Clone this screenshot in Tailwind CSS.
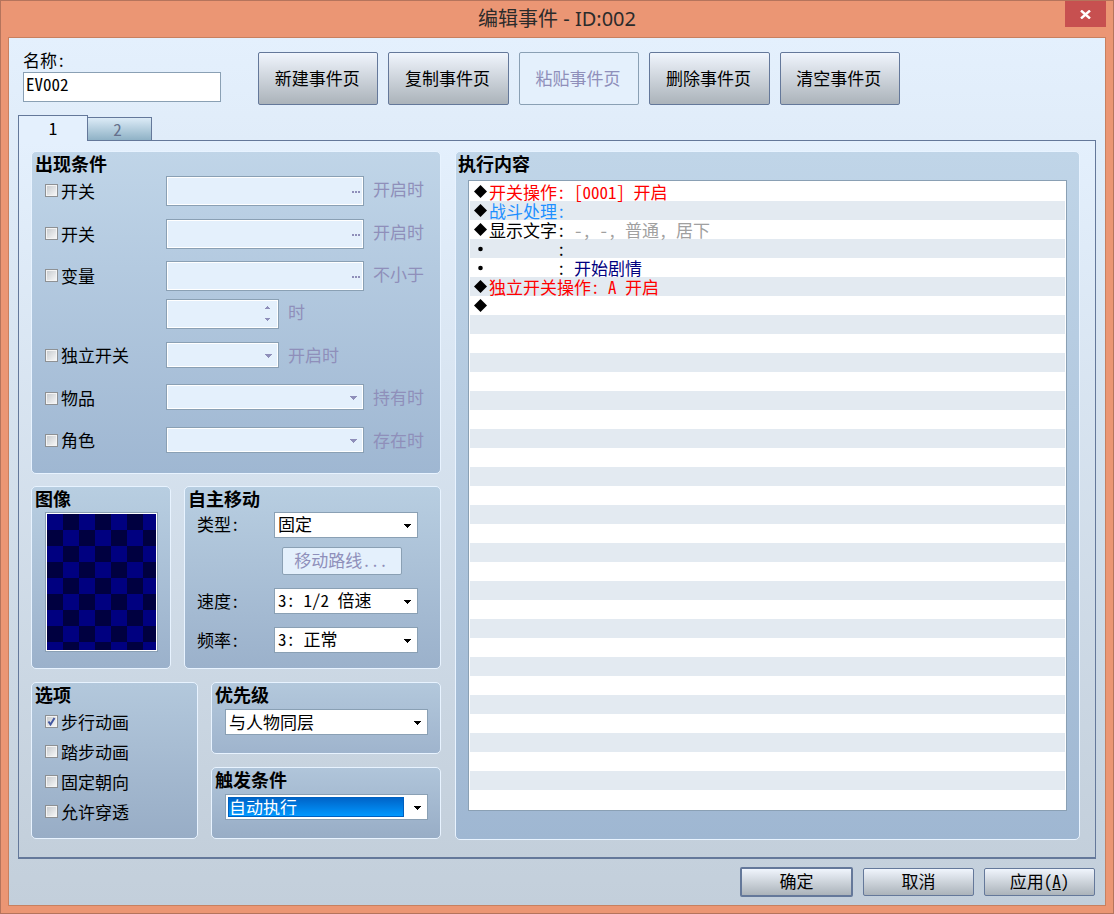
<!DOCTYPE html>
<html lang="zh-CN">

<head>
	<meta charset="UTF-8">
	<meta name="viewport" content="width=device-width, initial-scale=1.0">
	<title>编辑事件 - ID:002</title>
	<script src="https://cdn.jsdelivr.net/npm/@tailwindcss/browser@4"></script>
</head>

<body class="h-screen flex flex-col bg-[#eb9674] border border-[#b5745c] px-[7px] pb-[7px] text-[17px] leading-5 text-black font-['Noto_Sans_Mono_CJK_SC','Noto_Sans_CJK_SC',sans-serif]">
	<svg class="hidden">
		<symbol id="arrow" viewBox="0 0 7 4">
			<path fill="currentColor" d="M0 0h7v1H6v1H5v1H4v1H3V3H2V2H1V1H0z" />
		</symbol>
		<symbol id="dots" viewBox="0 0 8 2">
			<path fill="currentColor" d="M0 0h2v2H0zM3 0h2v2H3zM6 0h2v2H6z" />
		</symbol>
		<symbol id="diamond" viewBox="0 0 17 19">
			<path d="M8.500 3L15 9.500 8.500 16 2 9.500z" />
		</symbol>
	</svg>

	<!-- title bar -->
	<header class="h-9 shrink-0 flex items-start">
		<div class="w-[41px]"></div>
		<h1 class="flex-1 self-center text-center text-[20px] text-[#2b2b2b] font-['Noto_Sans','Noto_Sans_CJK_SC',sans-serif]">编辑事件 - ID:002</h1>
		<button type="button" aria-label="关闭" class="w-[41px] h-[26px] bg-[#c75050] flex items-center justify-center">
			<svg class="w-[11px] h-[9px]" viewBox="0 0 11 9"><path d="M1 .5l9 8M10 .5l-9 8" stroke="#fff" stroke-width="2.4" fill="none" /></svg>
		</button>
	</header>

	<main class="flex-1 min-h-0 flex flex-col border border-[#c8805f] bg-linear-to-b from-[#e4f0fd] to-[#c3cfdb] px-[9px]">
		<!-- name and page buttons -->
		<div class="flex pt-[14px] pl-[5px]">
			<div class="w-[198px] mr-[37px]">
				<label for="name" class="block h-5 leading-4">名称:</label>
				<input id="name" value="EV002" class="block w-full h-[30px] bg-white border border-[#8aa0b4] px-0.5 pb-2 outline-none">
			</div>
			<div class="grid grid-cols-5 gap-2.5 w-[642px] h-[53px]">
				<button type="button" class="pr-0.5 pb-0.5 border border-[#64789a] rounded-[2px] bg-linear-to-b from-[#f0f5fd] to-[#abb3ba]">新建事件页</button>
				<button type="button" class="pr-0.5 pb-0.5 border border-[#64789a] rounded-[2px] bg-linear-to-b from-[#f0f5fd] to-[#abb3ba]">复制事件页</button>
				<button type="button" disabled class="pr-0.5 pb-0.5 border border-[#8aa0b4] rounded-[2px] bg-[#e4f0fc] text-[#8f8fba]">粘贴事件页</button>
				<button type="button" class="pr-0.5 pb-0.5 border border-[#64789a] rounded-[2px] bg-linear-to-b from-[#f0f5fd] to-[#abb3ba]">删除事件页</button>
				<button type="button" class="pr-0.5 pb-0.5 border border-[#64789a] rounded-[2px] bg-linear-to-b from-[#f0f5fd] to-[#abb3ba]">清空事件页</button>
			</div>
		</div>

		<!-- tabs -->
		<div role="tablist" class="flex items-end mt-[10px] h-[26px] z-10">
			<button type="button" role="tab" aria-selected="true" class="w-[70px] h-[26px] pb-0.5 border border-b-0 border-[#64789a] bg-[#e4f0fd]">1</button>
			<button type="button" role="tab" aria-selected="false" class="w-16 h-6 pr-1 border border-l-0 border-[#64789a] bg-linear-to-b from-[#dcebf7] to-[#8fb2c6] text-[#65708c]">2</button>
		</div>

		<div class="flex-1 min-h-0 -mt-px flex gap-[14px] border border-b-2 border-[#64789a] bg-linear-to-b from-[#e4f0fd] to-[#c3cfdb] pl-3 pr-[15px] pt-[10px] pb-[17px]">
			<!-- left column -->
			<div class="w-[410px] shrink-0 flex flex-col">
				<section class="h-[323px] border border-[#e8f3ff] rounded-[5px] bg-linear-to-b from-[#c0d5e8] to-[#9fb7d2]">
					<h2 class="h-6 pl-[3px] leading-[22px] text-[18px] font-bold">出现条件</h2>
					<div class="flex items-center mb-[13px]">
						<label class="w-[134px] pl-[13px] flex items-center gap-[3px]"><input type="checkbox" class="appearance-none size-[13px] mb-0.5 border border-[#8e9194] ring-1 ring-inset ring-[#f4f4f4] bg-linear-to-br from-[#c4c8cc] to-[#fafafa]">开关</label>
						<div class="relative w-[198px] text-[#8f8fba]">
							<input aria-label="开关 1" disabled class="block w-full h-[30px] border border-[#8aa0b4] ring-1 ring-inset ring-white bg-[#e4f0fc]">
							<svg class="absolute right-1 top-[15px] w-2 h-0.5"><use href="#dots" /></svg>
						</div>
						<span class="pl-[9px] pb-1 text-[#8f8fba]">开启时</span>
					</div>
					<div class="flex items-center mb-3">
						<label class="w-[134px] pl-[13px] flex items-center gap-[3px]"><input type="checkbox" class="appearance-none size-[13px] mb-0.5 border border-[#8e9194] ring-1 ring-inset ring-[#f4f4f4] bg-linear-to-br from-[#c4c8cc] to-[#fafafa]">开关</label>
						<div class="relative w-[198px] text-[#8f8fba]">
							<input aria-label="开关 2" disabled class="block w-full h-[30px] border border-[#8aa0b4] ring-1 ring-inset ring-white bg-[#e4f0fc]">
							<svg class="absolute right-1 top-[15px] w-2 h-0.5"><use href="#dots" /></svg>
						</div>
						<span class="pl-[9px] pb-1 text-[#8f8fba]">开启时</span>
					</div>
					<div class="flex items-center mb-2">
						<label class="w-[134px] pl-[13px] flex items-center gap-[3px]"><input type="checkbox" class="appearance-none size-[13px] mb-0.5 border border-[#8e9194] ring-1 ring-inset ring-[#f4f4f4] bg-linear-to-br from-[#c4c8cc] to-[#fafafa]">变量</label>
						<div class="relative w-[198px] text-[#8f8fba]">
							<input aria-label="变量" disabled class="block w-full h-[30px] border border-[#8aa0b4] ring-1 ring-inset ring-white bg-[#e4f0fc]">
							<svg class="absolute right-1 top-[15px] w-2 h-0.5"><use href="#dots" /></svg>
						</div>
						<span class="pl-[9px] pb-1 text-[#8f8fba]">不小于</span>
					</div>
					<div class="flex items-center pl-[134px] mb-[13px]">
						<div class="relative w-[113px] text-[#8f8fba]">
							<input aria-label="变量值" disabled class="block w-full h-[30px] border border-[#8aa0b4] ring-1 ring-inset ring-white bg-[#e4f0fc]">
							<svg class="absolute right-[9px] top-[7px] w-[5px] h-[15px]" viewBox="0 0 5 15">
								<path fill="currentColor" d="M2 0h1v1h1v1h1v1H0V2h1V1h1zM0 12h5v1H4v1H3v1H2v-1H1v-1H0z" />
							</svg>
						</div>
						<span class="pl-[9px] pb-1 text-[#8f8fba]">时</span>
					</div>
					<div class="flex items-center mb-4">
						<label class="w-[134px] pl-[13px] flex items-center gap-[3px]"><input type="checkbox" class="appearance-none size-[13px] border border-[#8e9194] ring-1 ring-inset ring-[#f4f4f4] bg-linear-to-br from-[#c4c8cc] to-[#fafafa]">独立开关</label>
						<div class="relative w-[113px] text-[#8f8fba]">
							<select aria-label="独立开关" disabled class="block appearance-none w-full h-[26px] border border-[#8aa0b4] ring-1 ring-inset ring-white bg-[#e4f0fc]"></select>
							<svg class="absolute right-[7px] top-[12px] w-[7px] h-1"><use href="#arrow" /></svg>
						</div>
						<span class="pl-[9px] text-[#8f8fba]">开启时</span>
					</div>
					<div class="flex items-center mb-[17px]">
						<label class="w-[134px] pl-[13px] pt-0.5 flex items-center gap-[3px]"><input type="checkbox" class="appearance-none size-[13px] border border-[#8e9194] ring-1 ring-inset ring-[#f4f4f4] bg-linear-to-br from-[#c4c8cc] to-[#fafafa]">物品</label>
						<div class="relative w-[198px] text-[#8f8fba]">
							<select aria-label="物品" disabled class="block appearance-none w-full h-[26px] border border-[#8aa0b4] ring-1 ring-inset ring-white bg-[#e4f0fc]"></select>
							<svg class="absolute right-[7px] top-[12px] w-[7px] h-1"><use href="#arrow" /></svg>
						</div>
						<span class="pl-[9px] text-[#8f8fba]">持有时</span>
					</div>
					<div class="flex items-center">
						<label class="w-[134px] pl-[13px] flex items-center gap-[3px]"><input type="checkbox" class="appearance-none size-[13px] border border-[#8e9194] ring-1 ring-inset ring-[#f4f4f4] bg-linear-to-br from-[#c4c8cc] to-[#fafafa]">角色</label>
						<div class="relative w-[198px] text-[#8f8fba]">
							<select aria-label="角色" disabled class="block appearance-none w-full h-[26px] border border-[#8aa0b4] ring-1 ring-inset ring-white bg-[#e4f0fc]"></select>
							<svg class="absolute right-[7px] top-[12px] w-[7px] h-1"><use href="#arrow" /></svg>
						</div>
						<span class="pl-[9px] text-[#8f8fba]">存在时</span>
					</div>
				</section>

				<div class="flex justify-between h-[183px] mt-3">
					<section class="w-[140px] border border-[#e8f3ff] rounded-[5px] bg-linear-to-b from-[#b8cee1] to-[#9bb1cb]">
						<h2 class="h-[25px] pl-[3px] leading-[22px] text-[18px] font-bold">图像</h2>
						<!-- empty character graphic, 16px tiles -->
						<div class="ml-[13px] w-[113px] h-[140px] border border-[#8aa0b4] p-px bg-white">
							<div class="size-full bg-[conic-gradient(#000040_25%,#000080_0_50%,#000040_0_75%,#000080_0)] bg-size-[32px_32px]"></div>
						</div>
					</section>
					<section class="w-[257px] border border-[#e8f3ff] rounded-[5px] bg-linear-to-b from-[#b8cee1] to-[#9bb1cb]">
						<h2 class="h-[25px] pl-[3px] leading-[22px] text-[18px] font-bold">自主移动</h2>
						<div class="flex items-center mb-[9px] pl-3">
							<label for="move-type" class="w-[77px] pb-0.5">类型:</label>
							<div class="relative w-[144px]">
								<select id="move-type" class="block appearance-none w-full h-[26px] border border-[#8aa0b4] bg-white pl-[3px] pb-0.5 outline-none"><option>固定</option></select>
								<svg class="absolute right-[7px] top-[12px] w-[7px] h-1 pointer-events-none"><use href="#arrow" /></svg>
							</div>
						</div>
						<button type="button" disabled class="block ml-[97px] mb-[13px] w-[120px] h-7 pr-0.5 pb-0.5 border border-[#8aa0b4] rounded-[2px] bg-[#e4f0fc] text-[#8f8fba]">移动路线...</button>
						<div class="flex items-center mb-[13px] pl-3">
							<label for="move-speed" class="w-[77px]">速度:</label>
							<div class="relative w-[144px]">
								<select id="move-speed" class="block appearance-none w-full h-[26px] border border-[#8aa0b4] bg-white pl-[3px] pb-0.5 outline-none"><option>3: 1/2 倍速</option></select>
								<svg class="absolute right-[7px] top-[12px] w-[7px] h-1 pointer-events-none"><use href="#arrow" /></svg>
							</div>
						</div>
						<div class="flex items-center pl-3">
							<label for="move-freq" class="w-[77px]">频率:</label>
							<div class="relative w-[144px]">
								<select id="move-freq" class="block appearance-none w-full h-[26px] border border-[#8aa0b4] bg-white pl-[3px] pb-0.5 outline-none"><option>3: 正常</option></select>
								<svg class="absolute right-[7px] top-[12px] w-[7px] h-1 pointer-events-none"><use href="#arrow" /></svg>
							</div>
						</div>
					</section>
				</div>

				<div class="flex justify-between h-[157px] mt-[13px]">
					<section class="w-[167px] border border-[#e8f3ff] rounded-[5px] bg-linear-to-b from-[#b3c8dc] to-[#98adc6]">
						<h2 class="h-6 pl-[3px] leading-[22px] text-[18px] font-bold">选项</h2>
						<label class="h-[30px] pl-[13px] flex items-center gap-[3px]">
							<span class="relative block size-[13px] mb-0.5">
								<input type="checkbox" checked class="block appearance-none size-[13px] border border-[#8e9194] ring-1 ring-inset ring-[#f4f4f4] bg-linear-to-br from-[#c4c8cc] to-[#fafafa]">
								<svg class="absolute inset-0 size-[13px] pointer-events-none" viewBox="0 0 13 13"><path d="M3.5 6.5l2 3L9.5 3" fill="none" stroke="#4257a0" stroke-width="2" /></svg>
							</span>步行动画</label>
						<label class="h-[30px] pl-[13px] flex items-center gap-[3px]"><input type="checkbox" class="appearance-none size-[13px] mb-0.5 border border-[#8e9194] ring-1 ring-inset ring-[#f4f4f4] bg-linear-to-br from-[#c4c8cc] to-[#fafafa]">踏步动画</label>
						<label class="h-[30px] pl-[13px] flex items-center gap-[3px]"><input type="checkbox" class="appearance-none size-[13px] mb-0.5 border border-[#8e9194] ring-1 ring-inset ring-[#f4f4f4] bg-linear-to-br from-[#c4c8cc] to-[#fafafa]">固定朝向</label>
						<label class="h-[30px] pl-[13px] flex items-center gap-[3px]"><input type="checkbox" class="appearance-none size-[13px] mb-0.5 border border-[#8e9194] ring-1 ring-inset ring-[#f4f4f4] bg-linear-to-br from-[#c4c8cc] to-[#fafafa]">允许穿透</label>
					</section>
					<div class="w-[230px] flex flex-col justify-between">
						<section class="h-[72px] border border-[#e8f3ff] rounded-[5px] bg-linear-to-b from-[#b3c8dc] to-[#9fb4cd]">
							<h2 class="h-[26px] pl-[3px] leading-[22px] text-[18px] font-bold"><label for="priority">优先级</label></h2>
							<div class="relative ml-[13px] w-[203px]">
								<select id="priority" class="block appearance-none w-full h-[26px] border border-[#8aa0b4] bg-white pl-[3px] outline-none"><option>与人物同层</option></select>
								<svg class="absolute right-[7px] top-[12px] w-[7px] h-1 pointer-events-none"><use href="#arrow" /></svg>
							</div>
						</section>
						<section class="h-[72px] border border-[#e8f3ff] rounded-[5px] bg-linear-to-b from-[#b0c5da] to-[#98adc6]">
							<h2 class="h-[26px] pl-[3px] leading-[22px] text-[18px] font-bold"><label for="trigger">触发条件</label></h2>
							<div class="relative ml-[13px] w-[203px] h-[26px] border border-[#8aa0b4] bg-white p-0.5">
								<select id="trigger" class="block appearance-none w-[176px] h-5 leading-4 border border-[#0060bf] bg-linear-to-b from-[#0064c8] to-[#0098ff] text-white outline-none"><option>自动执行</option></select>
								<svg class="absolute right-[6px] top-[11px] w-[7px] h-1 pointer-events-none"><use href="#arrow" /></svg>
							</div>
						</section>
					</div>
				</div>
			</div>

			<!-- event commands -->
			<section class="flex-1 flex flex-col border border-[#e8f3ff] rounded-[5px] bg-linear-to-b from-[#c0d5e8] to-[#9fb7d2] px-3 pb-7">
				<h2 class="h-7 -ml-[10px] leading-[22px] text-[18px] font-bold">执行内容</h2>
				<div class="flex-1 border border-[#8aa0b4] bg-white p-px">
					<ul class="h-full pl-0.5 leading-[19px] bg-[repeating-linear-gradient(#fff_0_19px,#e3eaf1_19px_38px)]">
						<li class="flex h-[19px] whitespace-pre text-[#f00]"><svg class="w-[17px] h-[19px]"><use href="#diamond" /></svg>开关操作: [0001] 开启</li>
						<li class="flex h-[19px] whitespace-pre text-[#1e90ff]"><svg class="w-[17px] h-[19px]"><use href="#diamond" /></svg>战斗处理:</li>
						<li class="flex h-[19px] whitespace-pre"><svg class="w-[17px] h-[19px]"><use href="#diamond" /></svg>显示文字: <span class="text-[#a0a0a0]">-, -, 普通, 居下</span></li>
						<li class="flex h-[19px] whitespace-pre"><svg class="w-[17px] h-[19px]" viewBox="0 0 17 19"><circle cx="8.500" cy="10" r="2.300" /></svg>        :</li>
						<li class="flex h-[19px] whitespace-pre"><svg class="w-[17px] h-[19px]" viewBox="0 0 17 19"><circle cx="8.500" cy="10" r="2.300" /></svg>        : <span class="text-[#000080]">开始剧情</span></li>
						<li class="flex h-[19px] whitespace-pre text-[#f00]"><svg class="w-[17px] h-[19px]"><use href="#diamond" /></svg>独立开关操作: A 开启</li>
						<li class="flex h-[19px]"><svg class="w-[17px] h-[19px]"><use href="#diamond" /></svg></li>
					</ul>
				</div>
			</section>
		</div>

		<!-- dialog buttons -->
		<footer class="h-[46px] shrink-0 flex items-center justify-end gap-[10px] pr-px">
			<button type="submit" class="w-[113px] h-[30px] pb-0.5 border-2 border-[#64789a] rounded-[2px] bg-linear-to-b from-[#f0f5fd] to-[#abb3ba]">确定</button>
			<button type="button" class="w-[111px] h-7 pb-0.5 border border-[#64789a] rounded-[2px] bg-linear-to-b from-[#f0f5fd] to-[#abb3ba]">取消</button>
			<button type="button" class="w-[111px] h-7 pb-0.5 border border-[#64789a] rounded-[2px] bg-linear-to-b from-[#f0f5fd] to-[#abb3ba]">应用(<u>A</u>)</button>
		</footer>
	</main>
</body>

</html>
